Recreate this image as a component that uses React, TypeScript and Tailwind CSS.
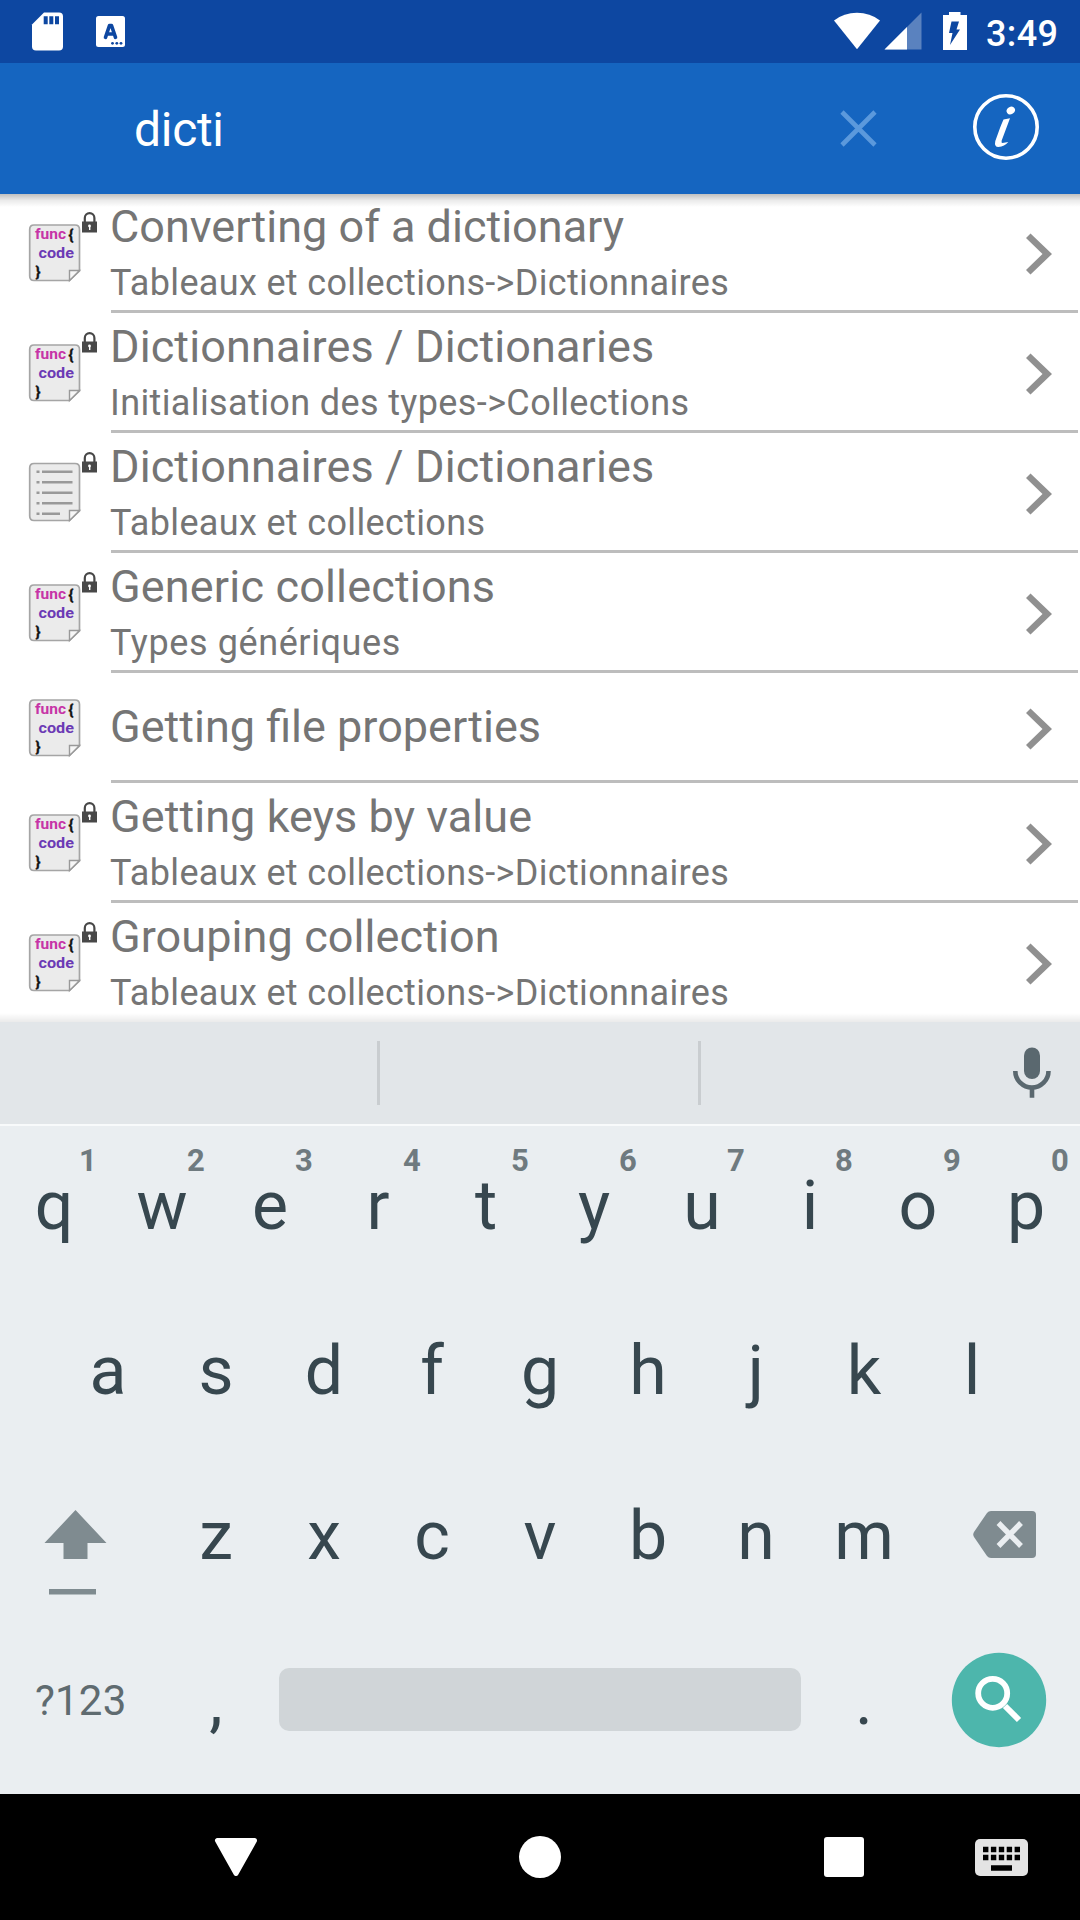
import React from "react";

type Entry = { title: string; sub?: string; kind: "code" | "doc"; tracking?: string; subTracking?: string };

const entries: Entry[] = [
  { title: "Converting of a dictionary", sub: "Tableaux et collections->Dictionnaires", kind: "code" },
  { title: "Dictionnaires / Dictionaries", sub: "Initialisation des types->Collections", kind: "code", tracking: "tracking-[0.11px]", subTracking: "tracking-[0.38px]" },
  { title: "Dictionnaires / Dictionaries", sub: "Tableaux et collections", kind: "doc", tracking: "tracking-[0.11px]" },
  { title: "Generic collections", sub: "Types génériques", kind: "code", tracking: "tracking-[0.16px]", subTracking: "tracking-[0.6px]" },
  { title: "Getting file properties", kind: "code" },
  { title: "Getting keys by value", sub: "Tableaux et collections->Dictionnaires", kind: "code", tracking: "tracking-[0.06px]" },
  { title: "Grouping collection", sub: "Tableaux et collections->Dictionnaires", kind: "code", tracking: "tracking-[0.08px]" },
];

function StatusBar() {
  return (
    <div className="flex h-[63px] shrink-0 items-start bg-[#0d47a1]">
      <svg width="140" height="63" viewBox="0 0 140 63" fill="#fff">
        <path d="M44 12.5H59a4 4 0 0 1 4 4V46.500a4 4 0 0 1-4 4H36a4 4 0 0 1-4-4V24.500Z" />
        <path d="M43.700 16.300h4v8h-4zM49.300 16.300h4v8h-4zM55 16.300h4v8h-4z" fill="#0d47a1" />
        <rect x="96" y="16" width="29" height="31" rx="2.500" />
        <path d="M105.500 37.300L109.500 25.500h2L115.500 37.300M107 34h7" fill="none" stroke="#0d47a1" strokeWidth="3.600" strokeLinecap="round" strokeLinejoin="round" />
        <circle cx="112.500" cy="43.300" r="1.400" fill="#0d47a1" />
        <circle cx="116.800" cy="43.300" r="1.400" fill="#0d47a1" />
        <circle cx="121" cy="43.300" r="1.400" fill="#0d47a1" />
      </svg>
      <svg className="ml-auto" width="150" height="63" viewBox="830 0 150 63" fill="#fff">
        <path d="M857 49.300L834 20.500Q844 12.800 857 12.800T880 20.500Z" />
        <path d="M921.500 12.500V49.500H884.500Z" opacity="0.320" />
        <path d="M907 27V49.500H884.500Z" />
        <path d="M949 12h11.500v3H967v35h-24V15h6z" />
        <path d="M951.500 21.500h7.500l-2.500 8h3.500l-10 15.500 2.500-12h-3.500z" fill="#0d47a1" />
      </svg>
      <span className="ml-[5px] mr-[22px] w-[73px] pl-[1px] pt-[2px] text-[36px] font-medium leading-[64px] tracking-[0.4px] text-white">3:49</span>
    </div>
  );
}

function AppBar() {
  return (
    <div className="relative z-10 flex h-[131px] shrink-0 items-center bg-[#1565c0]">
      <span className="ml-[134px] flex-1 pt-[2px] text-[48px] leading-[131px] tracking-[-0.3px] text-white">dicti</span>
      <svg width="240" height="131" viewBox="830 63 240 131" fill="none">
        <path d="M842 112l33 33M875 112l-33 33" stroke="#5b99dc" strokeWidth="4.600" />
        <circle cx="1006" cy="127" r="31.200" stroke="#fff" strokeWidth="3.600" />
        <ellipse cx="1010.800" cy="110.500" rx="4.400" ry="3.600" fill="#fff" transform="rotate(-35 1010.800 110.500)" />
        <path d="M1010 118.300L1003.500 119.500Q1001.500 124 1000 128L995.300 141Q994 147 998.500 147Q1004.500 146.500 1008.300 142L1002.500 143Q1001 143 1001.700 140.500Z" fill="#fff" />
      </svg>
      <div className="w-[10px]" />
      <div className="absolute inset-x-0 top-full h-[13px] bg-linear-to-b from-black/25 via-black/8 to-transparent" />
    </div>
  );
}

function EntryIcon({ kind, locked }: { kind: Entry["kind"]; locked: boolean }) {
  const top = kind === "doc" ? 30.5 : 32;
  return (
    <svg className="shrink-0" width="110" height="120" viewBox="0 0 110 120">
      <path
        d={`M34 ${top}H75Q79.500 ${top} 79.500 ${top + 4.5}V78L69.500 87.500H34Q29.700 87.500 29.700 83V${top + 4.5}Q29.700 ${top} 34 ${top}Z`}
        fill="#ebebeb"
        stroke="#a5a5a5"
        strokeWidth="1.700"
      />
      <path d="M69.500 87.500V77.500H79.500Z" fill="#f7f7f7" stroke="#999" strokeWidth="1.400" />
      {kind === "code" ? (
        <g fontFamily="Roboto, sans-serif" fontWeight="700" fontSize="15">
          <text x="35" y="46" textLength="31" lengthAdjust="spacingAndGlyphs" fill="#c634a6">func</text>
          <text x="68.500" y="46.500" fill="#111" stroke="#111" strokeWidth="0.400">{"{"}</text>
          <text x="38.500" y="65.200" textLength="35.500" lengthAdjust="spacingAndGlyphs" fill="#6b3ab5">code</text>
          <text x="35.500" y="83.500" fill="#111" stroke="#111" strokeWidth="0.400">{"}"}</text>
        </g>
      ) : (
        <g stroke="#999" strokeWidth="2.500">
          <path d="M42 38.700H72.500M42 49.200H72.500M42 59.700H72.500M42 70.200H72.500M42 80.700H60" />
          <path d="M36.500 38.700h3M36.500 49.200h3M36.500 59.700h3M36.500 70.200h3M36.500 80.700h3" />
        </g>
      )}
      {locked && (
        <g>
          <path d="M84.800 29.500V25a4.800 4.800 0 0 1 9.600 0V29.500" fill="none" stroke="#484848" strokeWidth="2.200" />
          <rect x="82" y="28.500" width="15" height="11" fill="#484848" />
          <circle cx="89.500" cy="33" r="1.400" fill="#fff" />
          <path d="M89 33.500h1.400v3.500h-1.400z" fill="#fff" />
        </g>
      )}
    </svg>
  );
}

function EntryRow({ entry, last }: { entry: Entry; last: boolean }) {
  return (
    <div className={`relative flex shrink-0 items-center ${entry.sub ? "h-[120px]" : "h-[110px]"}`}>
      <EntryIcon kind={entry.kind} locked={!!entry.sub} />
      <div className={`flex flex-1 flex-col whitespace-nowrap text-[#757575] ${entry.sub ? "h-[120px] pt-[5px]" : "h-[110px] pt-[25px]"}`}>
        <span className={`text-[45px] leading-[57px] ${entry.tracking ?? ""}`}>{entry.title}</span>
        {entry.sub && <span className={`text-[36px] leading-[56px] ${entry.subTracking ?? "tracking-[0.34px]"}`}>{entry.sub}</span>}
      </div>
      <svg className="mr-[26px] mt-px shrink-0" width="30" height="42" viewBox="0 0 30 42">
        <path d="M6.500 0.500L28 21L6.500 41.500L2 37L18.500 21L2 5Z" fill="#909090" />
      </svg>
      {!last && <div className="absolute bottom-0 left-[111px] right-[2px] h-[3px] bg-[#bdbdbd]" />}
    </div>
  );
}

function Suggestions() {
  return (
    <div className="relative z-10 flex h-[102px] shrink-0 items-center bg-[#e2e6e9]">
      <div className="absolute inset-x-0 bottom-full h-[9px] bg-linear-to-b from-black/0 to-black/8" />
      <div className="ml-[377px] h-[64px] w-[3px] bg-[#c9cdd0]" />
      <div className="ml-[318px] h-[64px] w-[3px] bg-[#c9cdd0]" />
      <svg className="ml-auto mr-[28px]" width="40" height="52" viewBox="1012 1047 40 52">
        <rect x="1024" y="1047.500" width="16" height="31.500" rx="8" fill="#5a686f" />
        <path d="M1015.300 1071a16.600 16.600 0 0 0 33.200 0M1032 1087V1097.700" fill="none" stroke="#5a686f" strokeWidth="4.600" />
      </svg>
    </div>
  );
}

function Key({ label, hint }: { label: string; hint?: string }) {
  return (
    <div className="relative w-[108px] pt-px text-center text-[68px] leading-[143px] text-[#37474f]">
      {label}
      {hint && (
        <span className="absolute left-[74px] top-[7px] w-[28px] text-center text-[31px] font-bold leading-[40px] text-[#6f7a7f]">
          {hint}
        </span>
      )}
    </div>
  );
}

function Keyboard() {
  return (
    <div className="flex flex-1 flex-col border-t-2 border-[#f8fafb] bg-[#eaeef1] pt-[8px]">
      <div className="flex h-[165px]">
        {"qwertyuiop".split("").map((k, i) => (
          <Key key={k} label={k} hint={String((i + 1) % 10)} />
        ))}
      </div>
      <div className="flex h-[165px] justify-center">
        {"asdfghjkl".split("").map((k) => (
          <Key key={k} label={k} />
        ))}
      </div>
      <div className="flex h-[165px]">
        <svg width="162" height="165" viewBox="0 1464 162 165" fill="#7f8b90">
          <path d="M75.500 1510L106.500 1543H87.500V1559H63.500V1543H44.500Z" />
          <path d="M49 1589h47v5.500H49z" />
        </svg>
        {"zxcvbnm".split("").map((k) => (
          <Key key={k} label={k} />
        ))}
        <svg width="162" height="165" viewBox="918 1464 162 165">
          <path d="M991 1511H1032a4 4 0 0 1 4 4V1554a4 4 0 0 1-4 4H991q-2.500 0-4-2L974 1537q-1.500-2.500 0-5L987 1513q1.500-2 4-2Z" fill="#7f8b90" />
          <path d="M998.500 1523l22.500 23M1021 1523l-22.500 23" stroke="#eaeef1" strokeWidth="5.400" />
        </svg>
      </div>
      <div className="flex h-[165px]">
        <span className="w-[162px] pl-[35px] pt-[36px] text-[42px] leading-[72px] tracking-[0.2px] text-[#5f6b70]">?123</span>
        <Key label="," />
        <div className="ml-[9px] mr-[9px] mt-[39px] h-[63px] w-[522px] rounded-[10px] bg-[#d0d5d8]" />
        <Key label="." />
        <svg width="162" height="165" viewBox="918 1629 162 165">
          <circle cx="999" cy="1700" r="47.200" fill="#4db6ac" />
          <circle cx="992.700" cy="1693.300" r="14.500" fill="none" stroke="#fff" strokeWidth="5.800" />
          <path d="M1005 1706L1019 1720" stroke="#fff" strokeWidth="6" />
        </svg>
      </div>
    </div>
  );
}

function NavBar() {
  return (
    <div className="flex h-[126px] shrink-0 items-center bg-black">
      <svg className="ml-[214px]" width="44" height="44" viewBox="214 1835 44 44" fill="#fff">
        <path d="M217.500 1840.500H254.500L236 1873.500Z" stroke="#fff" strokeWidth="5" strokeLinejoin="round" />
      </svg>
      <div className="ml-[261px] size-[42px] rounded-full bg-white" />
      <div className="ml-[263px] size-[40px] rounded-[3px] bg-white" />
      <svg className="ml-[111px] mt-[1px]" width="53" height="37" viewBox="0 0 53 37">
        <rect width="53" height="37" rx="5" fill="#e4e4e4" />
        <path d="M8 10.500H45M8 18.500H45" stroke="#000" strokeWidth="5.300" strokeDasharray="5.400 2.500" />
        <path d="M16 29H37" stroke="#000" strokeWidth="5.500" />
      </svg>
    </div>
  );
}

export default function App() {
  return (
    <div className="flex h-[1920px] w-[1080px] flex-col overflow-hidden bg-white font-[Roboto,sans-serif]">
      <StatusBar />
      <AppBar />
      <div className="-mt-px flex h-[829px] shrink-0 flex-col overflow-hidden bg-white">
        {entries.map((e, i) => (
          <EntryRow key={i} entry={e} last={i === entries.length - 1} />
        ))}
      </div>
      <Suggestions />
      <Keyboard />
      <NavBar />
    </div>
  );
}
